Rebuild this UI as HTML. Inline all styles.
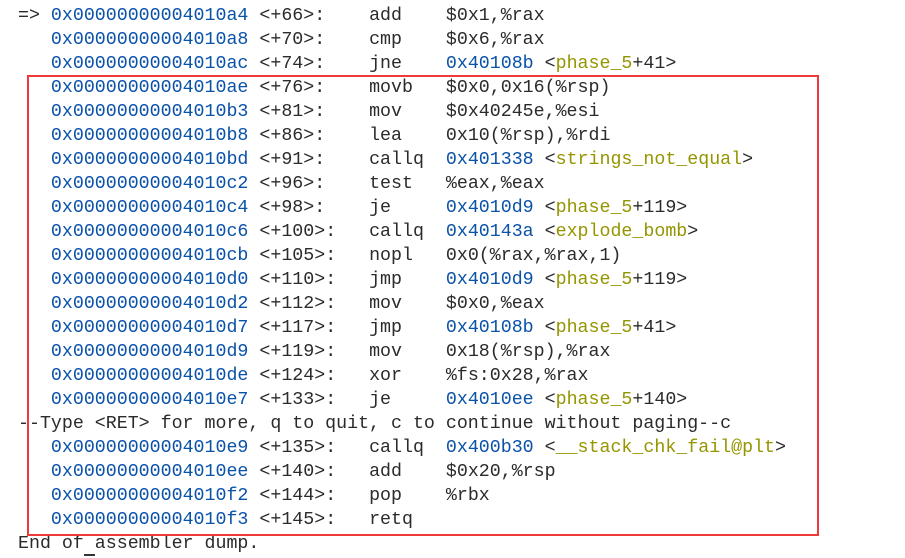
<!DOCTYPE html>
<html><head><style>
html,body{margin:0;padding:0;background:#fff;width:905px;height:558px;overflow:hidden}
pre{position:absolute;left:18px;top:4px;margin:0;font-family:"Liberation Mono",monospace;font-size:18.3px;line-height:24px;color:#2b2b2b}
.a{color:#0a52a8}.s{color:#959500}
#box{position:absolute;left:27px;top:75px;width:788px;height:457px;border:2px solid #ee3a3a}
#cur{position:absolute;left:84px;top:554px;width:11px;height:2px;background:#333}
</style></head><body>
<pre>=> <span class="a">0x00000000004010a4</span> &lt;+66&gt;:    add    $0x1,%rax
   <span class="a">0x00000000004010a8</span> &lt;+70&gt;:    cmp    $0x6,%rax
   <span class="a">0x00000000004010ac</span> &lt;+74&gt;:    jne    <span class="a">0x40108b</span> &lt;<span class="s">phase_5</span>+41&gt;
   <span class="a">0x00000000004010ae</span> &lt;+76&gt;:    movb   $0x0,0x16(%rsp)
   <span class="a">0x00000000004010b3</span> &lt;+81&gt;:    mov    $0x40245e,%esi
   <span class="a">0x00000000004010b8</span> &lt;+86&gt;:    lea    0x10(%rsp),%rdi
   <span class="a">0x00000000004010bd</span> &lt;+91&gt;:    callq  <span class="a">0x401338</span> &lt;<span class="s">strings_not_equal</span>&gt;
   <span class="a">0x00000000004010c2</span> &lt;+96&gt;:    test   %eax,%eax
   <span class="a">0x00000000004010c4</span> &lt;+98&gt;:    je     <span class="a">0x4010d9</span> &lt;<span class="s">phase_5</span>+119&gt;
   <span class="a">0x00000000004010c6</span> &lt;+100&gt;:   callq  <span class="a">0x40143a</span> &lt;<span class="s">explode_bomb</span>&gt;
   <span class="a">0x00000000004010cb</span> &lt;+105&gt;:   nopl   0x0(%rax,%rax,1)
   <span class="a">0x00000000004010d0</span> &lt;+110&gt;:   jmp    <span class="a">0x4010d9</span> &lt;<span class="s">phase_5</span>+119&gt;
   <span class="a">0x00000000004010d2</span> &lt;+112&gt;:   mov    $0x0,%eax
   <span class="a">0x00000000004010d7</span> &lt;+117&gt;:   jmp    <span class="a">0x40108b</span> &lt;<span class="s">phase_5</span>+41&gt;
   <span class="a">0x00000000004010d9</span> &lt;+119&gt;:   mov    0x18(%rsp),%rax
   <span class="a">0x00000000004010de</span> &lt;+124&gt;:   xor    %fs:0x28,%rax
   <span class="a">0x00000000004010e7</span> &lt;+133&gt;:   je     <span class="a">0x4010ee</span> &lt;<span class="s">phase_5</span>+140&gt;
--Type &lt;RET&gt; for more, q to quit, c to continue without paging--c
   <span class="a">0x00000000004010e9</span> &lt;+135&gt;:   callq  <span class="a">0x400b30</span> &lt;<span class="s">__stack_chk_fail@plt</span>&gt;
   <span class="a">0x00000000004010ee</span> &lt;+140&gt;:   add    $0x20,%rsp
   <span class="a">0x00000000004010f2</span> &lt;+144&gt;:   pop    %rbx
   <span class="a">0x00000000004010f3</span> &lt;+145&gt;:   retq
End of assembler dump.</pre>
<div id="box"></div>
<div id="cur"></div>
</body></html>
